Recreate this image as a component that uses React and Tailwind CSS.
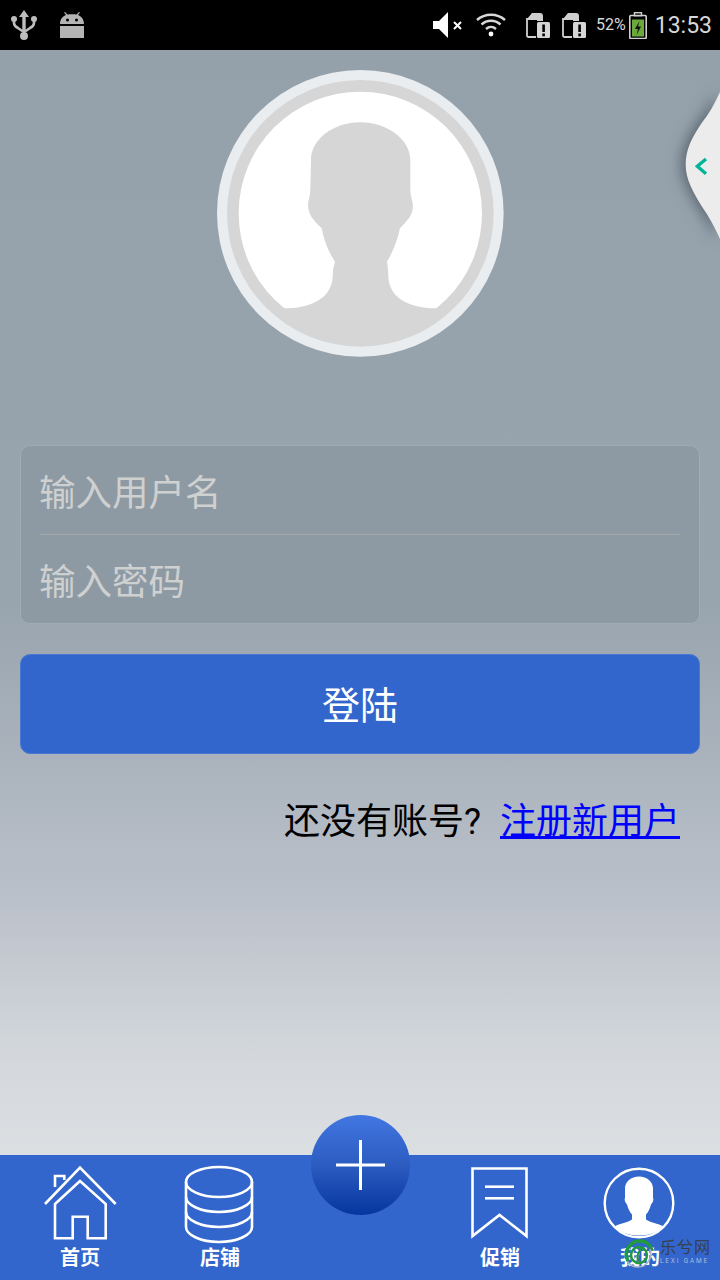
import React from 'react';

const cjk = "font-['Roboto','Noto_Sans_CJK_SC',sans-serif]";

// Status bar icons
const IconUsb = () => (
  <svg width="26" height="30" viewBox="0 0 26 30" fill="#bdbdbd" stroke="#bdbdbd">
    <path d="M13 0l5 7h-3.300v16h-3.400V7H8z" stroke="none" />
    <path d="M3 10v3c0 3 2 4 4 5l5 3.500M23 10v3c0 3-2 4-4 5l-5 3.500" fill="none" strokeWidth="2.600" />
    <circle cx="3" cy="9" r="3" stroke="none" />
    <circle cx="23" cy="9" r="3" stroke="none" />
    <circle cx="13" cy="26" r="4" stroke="none" />
  </svg>
);

const IconAndroid = () => (
  <svg width="26" height="26" viewBox="0 0 26 26" fill="#b4b4b4">
    <path d="M1 12C1 7 4 4 7 3L5 0.500 6 0l2.500 2.500C10 2 16 2 17.500 2.500L20 0l1 0.500L19 3c3 1 6 4 6 9z" />
    <circle cx="8.500" cy="8" r="1.500" fill="#000" />
    <circle cx="17.500" cy="8" r="1.500" fill="#000" />
    <path d="M1 14h24v12H1z" />
  </svg>
);

const IconMute = () => (
  <svg width="30" height="26" viewBox="0 0 30 26" fill="#fff">
    <path d="M0 9h6l9-9v26l-9-9H0z" />
    <path d="M21 10l7 7M28 10l-7 7" stroke="#fff" strokeWidth="2" />
  </svg>
);

const IconWifi = () => (
  <svg width="30" height="24" viewBox="0 0 30 24" fill="none" stroke="#d8d8d8" strokeWidth="2.400">
    <path d="M1 7c8-7 20-7 28 0" />
    <path d="M5.500 11.500c5.500-5 13.500-5 19 0" />
    <path d="M10 16c3-2.700 7-2.700 10 0" />
    <circle cx="15" cy="21" r="2.400" fill="#fff" stroke="none" />
  </svg>
);

const IconSim = () => (
  <svg width="24" height="26" viewBox="0 0 24 26">
    <path d="M10 25H2.500Q1 25 1 23.500V6" fill="none" stroke="#cfcfcf" strokeWidth="1.800" />
    <path d="M1 7l5-6h8q3 0 3 3v5h-6v-1H1z" fill="#cfcfcf" />
    <rect x="11" y="10" width="13" height="16" rx="1.500" fill="#d6d6d6" />
    <rect x="16.300" y="12.500" width="2.600" height="7.500" fill="#000" />
    <rect x="16.300" y="21.500" width="2.600" height="2.800" fill="#000" />
  </svg>
);

const IconBattery = () => (
  <svg width="18" height="27" viewBox="0 0 18 27">
    <rect x="5.500" y="0.700" width="7" height="3" fill="none" stroke="#d0d0d0" strokeWidth="1.400" />
    <rect x="0.800" y="3.500" width="16.400" height="23" rx="1" fill="none" stroke="#d0d0d0" strokeWidth="1.600" />
    <rect x="3" y="7.500" width="12" height="17" fill="#6aa93a" />
    <path d="M10.500 9L6 17h3l-1.500 6 4.500-8.500H9z" fill="#111" />
  </svg>
);

// Nav icons, drawn in 80px boxes
const IconHome = () => (
  <svg width="80" height="76" viewBox="0 0 80 76" fill="none" stroke="#fff" strokeWidth="2.600">
    <path d="M5 39L40 2.700 75.700 39" />
    <path d="M15 22V11h9.300v4" />
    <path d="M15 39L40 16l25.700 23v34.300h-18V51.700h-15v21.600H15z" />
  </svg>
);

const IconStore = () => (
  <svg width="80" height="80" viewBox="0 0 80 80" fill="none" stroke="#fff" strokeWidth="2.600">
    <ellipse cx="39" cy="17" rx="33" ry="15" />
    <path d="M6 17v45" />
    <path d="M72 17v45" />
    <path d="M6 32c0 8 15 15 33 15s33-7 33-15" />
    <path d="M6 47c0 8 15 15 33 15s33-7 33-15" />
    <path d="M6 62c0 8 15 15 33 15s33-7 33-15" />
  </svg>
);

const IconPromo = () => (
  <svg width="80" height="76" viewBox="0 0 80 76" fill="none" stroke="#fff" strokeWidth="2.600">
    <path d="M12.500 3.500h54V71l-27-21-27 21z" />
    <path d="M25 21.700h29" />
    <path d="M25 33.300h29" />
  </svg>
);

const IconMine = () => (
  <svg width="80" height="76" viewBox="0 0 80 76">
    <circle cx="39" cy="38" r="34.300" fill="none" stroke="#fff" strokeWidth="2.400" />
    <path
      d="M39 11.500c-8 0-14 5-14 12v9c-1 2 0 5 2 7 1 4 3 8 5 10v5c-4 3-12 4-18 7 6 6 15 9 25 9s19-3 25-9c-6-3-14-4-18-7v-5c2-2 4-6 5-10 2-2 3-5 2-7v-9c0-7-6-12-14-12z"
      fill="#fff"
    />
  </svg>
);

const Avatar = () => (
  <svg width="287" height="287" viewBox="48 30 861 861">
    <circle cx="478" cy="460" r="430" fill="#e9edf0" />
    <circle cx="478" cy="460" r="400" fill="#d6d6d6" />
    <circle cx="478" cy="460" r="365" fill="#fff" />
    <path
      d="M478 187C395 187 330 240 330 300L328 390Q328 405 322 425Q318 450 332 472Q345 490 362 505Q372 560 402 605Q395 625 395 650C392 720 320 745 250 745Q478 960 708 745C635 745 565 720 562 650Q562 625 558 605Q585 560 597 505Q612 490 626 472Q640 450 634 425Q628 405 628 390L628 300C628 240 560 187 478 187Z"
      fill="#d6d6d6"
    />
  </svg>
);

const SideHandle = () => (
  <svg
    width="50"
    height="170"
    viewBox="30 40 150 510"
    className="absolute right-0 top-[33px] drop-shadow-[-4px_0_7px_rgba(50,60,70,0.6)]"
  >
    <path d="M190 45C170 90 150 130 125 160C95 205 77 240 77 285C77 330 100 370 135 425C155 455 170 485 190 530z" fill="#ececec" />
    <path d="M138 268L112 290L138 312" fill="none" stroke="#00b595" strokeWidth="10" />
  </svg>
);

const navItems = [
  { label: '首页', icon: <IconHome /> },
  { label: '店铺', icon: <IconStore /> },
  null,
  { label: '促销', icon: <IconPromo /> },
  { label: '我的', icon: <IconMine /> },
];

export default function App() {
  return (
    <div className={`relative flex h-[1280px] w-[720px] flex-col overflow-hidden ${cjk}`}>
      {/* Status bar */}
      <div className="flex h-[50px] items-center justify-between bg-black pl-[11px] pr-[8px]">
        <div className="flex items-center gap-[22px]">
          <IconUsb />
          <IconAndroid />
        </div>
        <div className="flex items-center text-[#d8d8d8]">
          <IconMute />
          <div className="ml-[13px]"><IconWifi /></div>
          <div className="ml-[20px]"><IconSim /></div>
          <div className="ml-[12px]"><IconSim /></div>
          <span className="ml-[10px] text-[16px] leading-none">52%</span>
          <div className="ml-[3px]"><IconBattery /></div>
          <span className="ml-[8px] text-[23px] leading-none">13:53</span>
        </div>
      </div>

      {/* Login form */}
      <div className="relative flex flex-1 flex-col items-center bg-[linear-gradient(180deg,#94a1ab_0%,#98a4ae_50%,#bbc1ca_77%,#d5d9dd_92%,#dbdfe2_100%)] px-[20px] pt-[20px]">
        <SideHandle />
        <Avatar />

        <div className="mt-[88px] h-[179px] w-full rounded-[10px] border border-[#a0abb3] bg-[#8d9aa4] px-[19px]">
          <div className="flex h-[89px] items-center border-b border-[#a6a8a8] pt-[8px] text-[36.5px] leading-none text-[#cfd0d0]"><span className="-ml-[1px]">输入用户名</span></div>
          <div className="flex h-[88px] items-center pt-[8px] text-[36.5px] leading-none text-[#cfd0d0]"><span className="-ml-[1px]">输入密码</span></div>
        </div>

        <button className="mt-[30px] flex h-[100px] w-full items-center justify-center rounded-[10px] border border-[#4a78d0] bg-[#3366cc] pt-[5px] text-[38px] text-white">
          登陆
        </button>

        <div className="mt-[45px] w-full pr-[20px] text-right text-[36px] leading-[46px] text-black">
          还没有账号?<span className="ml-[19px] text-[#0000ff] underline">注册新用户</span>
        </div>
      </div>

      {/* Bottom nav */}
      <div className="grid h-[125px] grid-cols-5 bg-[#3366cc] px-[10px] pt-[10px]">
        {navItems.map((item, i) =>
          item ? (
            <div key={i} className="relative flex flex-col items-center">
              <div className="h-[80px]">{item.icon}</div>
              <span className="absolute top-[80px] text-[20px] font-bold leading-[26px] text-white">{item.label}</span>
            </div>
          ) : (
            <div key={i} />
          )
        )}
      </div>

      {/* Center add button */}
      <button className="absolute left-[311px] top-[1115px] flex h-[100px] w-[99px] items-center justify-center rounded-full bg-[linear-gradient(180deg,#4276e2_0%,#2c5cc0_50%,#0536a0_100%)]">
        <svg width="49" height="50" viewBox="0 0 49 50" stroke="#fff" strokeWidth="3">
          <path d="M24.500 0v50M0 25h49" />
        </svg>
      </button>

      {/* Watermark */}
      <div className="absolute left-[624px] top-[1239px] flex items-start gap-[6px]">
        <svg width="30" height="30" viewBox="0 0 30 30" fill="none">
          <path d="M4 22C-1 12 6 2 16 2c6 0 11 4 12 10" stroke="#1f9a3c" strokeWidth="3.500" />
          <path d="M26 10c3 9-3 18-12 18-4 0-8-2-10-5" stroke="#a7b3c7" strokeWidth="1.500" />
          <circle cx="15" cy="16" r="8" stroke="#1f9a3c" strokeWidth="2.500" />
          <path d="M14 22c-2-6 1-11 5-13" stroke="#1f9a3c" strokeWidth="2" />
        </svg>
        <div className="flex flex-col items-start">
          <span className="text-[16px] leading-[17px] tracking-[1px] text-[#36404f]">乐兮网</span>
          <span className="text-[6.500px] leading-[10px] tracking-[1.800px] text-[#a9bbdd]">LEXI GAME</span>
        </div>
      </div>
    </div>
  );
}
